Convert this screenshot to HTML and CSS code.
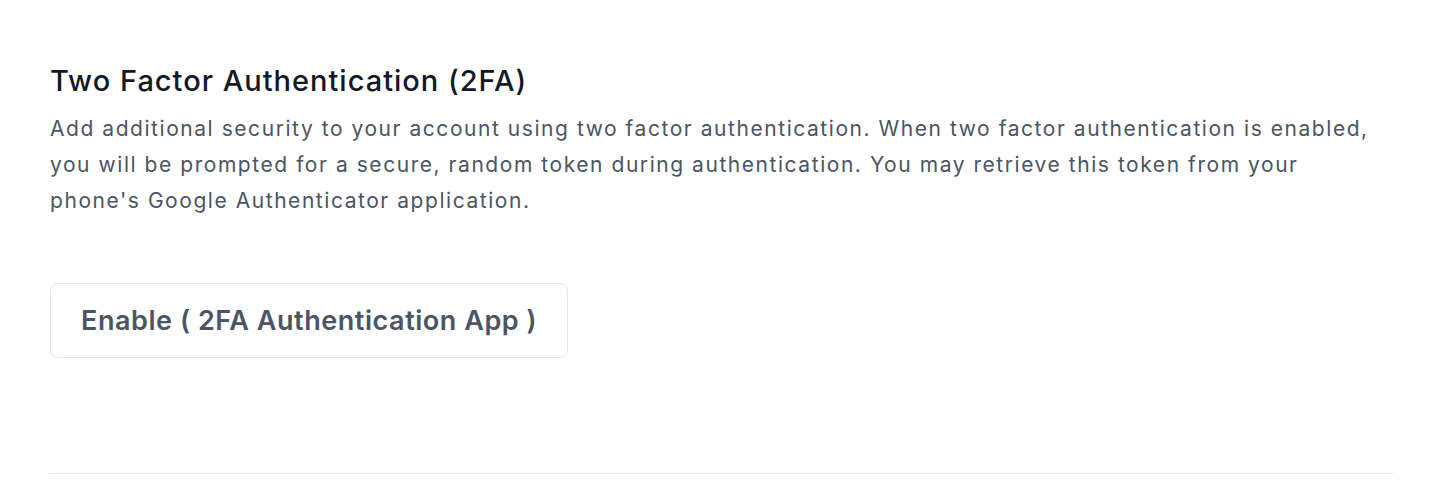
FILE: index.html
```html
<!DOCTYPE html>
<html lang="en">
<head>
  <meta charset="UTF-8" />
  <meta name="viewport" content="width=device-width, initial-scale=1.0"/>
  <title>Two Factor Authentication</title>
  <link rel="stylesheet" href="styles.css">
</head>
<body>

  <section class="settings-section">
    <h2 class="section-title">Two Factor Authentication (2FA)</h2>
    <p class="section-desc">
      Add additional security to your account using two factor authentication. When two factor authentication is enabled, you will be prompted for a secure, random token during authentication. You may retrieve this token from your phone's Google Authenticator application.
    </p>

    <div class="actions">
      <button type="button" class="btn-outline">Enable ( 2FA Authentication App )</button>
    </div>
  </section>

  <hr class="divider">

</body>
</html>
```

FILE: styles.css
```css
:root {
  --ink: #111827;
  --muted: #4b5563;
  --line: #e5e7eb;
}

body {
  font-family: Inter, "Noto Sans", Arial, sans-serif;
  background-color: #ffffff;
  margin: 0;
  padding: 0 53px 0 50px;
}

.settings-section {
  padding-top: 63px;
}

.section-title {
  margin: 0;
  font-size: 29px;
  font-weight: 500;
  line-height: 36px;
  letter-spacing: 1px;
  color: var(--ink);
}

.section-desc {
  margin: 12px 0 0;
  font-size: 21px;
  line-height: 36px;
  letter-spacing: 1.55px;
  color: var(--muted);
  max-width: 1340px;
}

.actions {
  margin-top: 64px;
}

.btn-outline {
  font-family: inherit;
  font-size: 27px;
  font-weight: 600;
  letter-spacing: 0.55px;
  color: var(--muted);
  background-color: #ffffff;
  border: 1px solid var(--line);
  border-radius: 8px;
  padding: 20px 30px;
  cursor: pointer;
}

.divider {
  margin: 115px 0 0;
  border: none;
  border-top: 1px solid var(--line);
}
```
